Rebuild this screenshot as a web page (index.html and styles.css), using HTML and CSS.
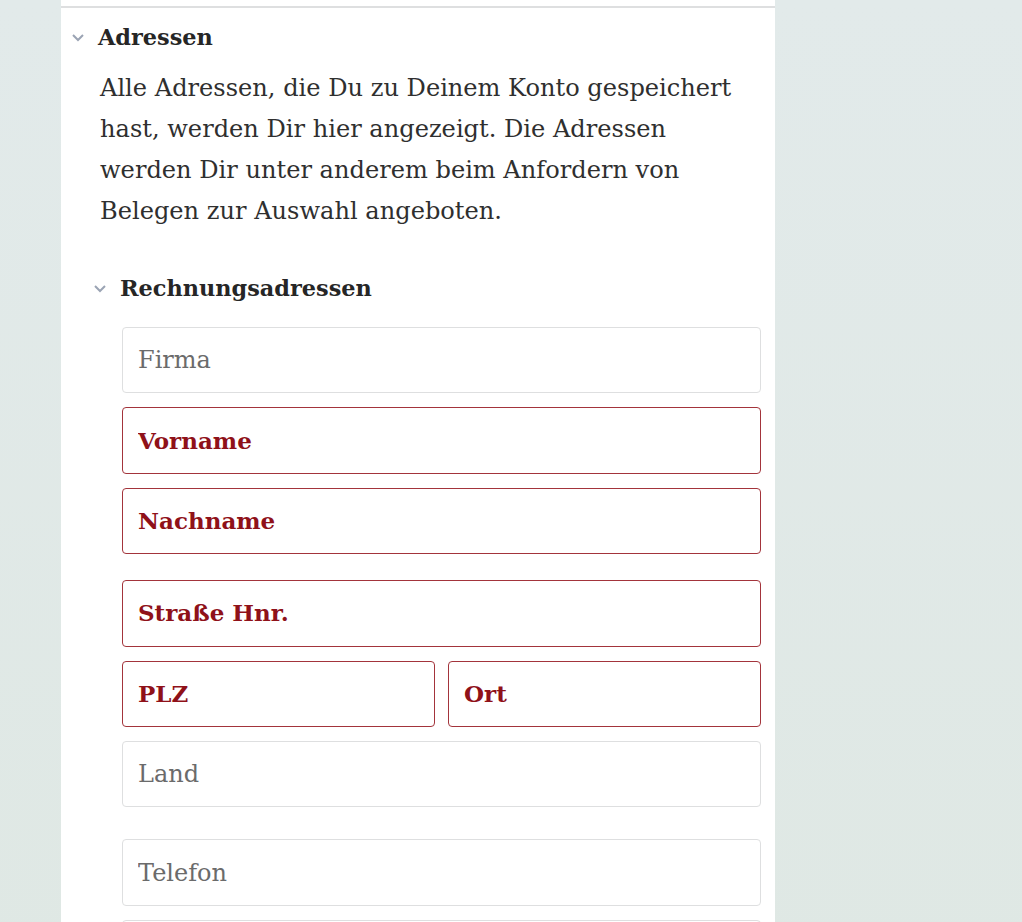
FILE: index.html
```html
<!DOCTYPE html>
<html lang="de">
<head>
  <meta charset="UTF-8">
  <meta name="viewport" content="width=device-width, initial-scale=1.0">
  <title>Adressen</title>
  <link rel="stylesheet" href="styles.css">
</head>
<body>
  <div class="panel">
    <section class="section">
      <h2 class="section-title">
        <svg class="chevron" width="14" height="10" viewBox="0 0 14 10" fill="none" stroke="currentColor" stroke-width="2">
          <polyline points="2,3 7,8 12,3"/>
        </svg>
        Adressen
      </h2>
      <p class="section-text">
        Alle Adressen, die Du zu Deinem Konto gespeichert hast, werden Dir hier angezeigt. Die Adressen werden Dir unter anderem beim Anfordern von Belegen zur Auswahl angeboten.
      </p>

      <div class="subsection">
        <h3 class="subsection-title">
          <svg class="chevron" width="14" height="10" viewBox="0 0 14 10" fill="none" stroke="currentColor" stroke-width="2">
            <polyline points="2,3 7,8 12,3"/>
          </svg>
          Rechnungsadressen
        </h3>

        <form class="address-form">
          <div class="field-group">
            <input class="field" type="text" placeholder="Firma">
            <input class="field required" type="text" placeholder="Vorname">
            <input class="field required" type="text" placeholder="Nachname">
          </div>
          <div class="field-group">
            <input class="field required" type="text" placeholder="Straße Hnr.">
            <div class="field-row">
              <input class="field required" type="text" placeholder="PLZ">
              <input class="field required" type="text" placeholder="Ort">
            </div>
            <input class="field" type="text" placeholder="Land">
          </div>
          <div class="field-group spaced">
            <input class="field" type="text" placeholder="Telefon">
            <input class="field" type="text" placeholder="E-Mail">
          </div>
        </form>
      </div>
    </section>
  </div>
</body>
</html>
```

FILE: styles.css
```css
:root {
  --bg: #e1e9e6;
  --surface: #ffffff;
  --text: #2b2b2b;
  --muted: #6b6b6b;
  --line: #dedfe0;
  --error: #8f1119;
  --error-line: #a3343b;
  --chevron: #9ba4b4;
}

* {
  margin: 0;
  padding: 0;
  box-sizing: border-box;
}

body {
  font-family: 'DejaVu Serif', 'Liberation Serif', serif;
  background: linear-gradient(180deg, #e2eaea 0%, #dfe8e4 100%);
  color: var(--text);
  min-height: 100vh;
  overflow: hidden;
}

.panel {
  width: 714px;
  margin-left: 61px;
  min-height: 100vh;
  padding-top: 6px;
  background: var(--surface);
}

.section {
  border-top: 2px solid var(--line);
  padding: 13px 0 0 10px;
}

.section-title,
.subsection-title {
  display: flex;
  align-items: center;
  gap: 13px;
  font-size: 22.4px;
  font-weight: 700;
  line-height: 32px;
  color: #262626;
}

.chevron {
  color: var(--chevron);
  flex-shrink: 0;
}

.section-text {
  margin: 15px 0 0 29px;
  max-width: 645px;
  font-size: 24.1px;
  line-height: 41px;
  color: #2f2f2f;
}

.subsection {
  margin: 40px 0 0 22px;
}

.address-form {
  margin: 23px 0 0 29px;
  width: 639px;
  display: flex;
  flex-direction: column;
  gap: 26px;
}

.field-group {
  display: flex;
  flex-direction: column;
  gap: 14px;
}

.field-group.spaced {
  margin-top: 6px;
}

.field-row {
  display: grid;
  grid-template-columns: 1fr 1fr;
  gap: 13px;
}

.field {
  width: 100%;
  height: 66.4px;
  padding: 0 15px;
  border: 1px solid var(--line);
  border-radius: 4px;
  background: var(--surface);
  font-family: inherit;
  font-size: 24px;
  color: var(--text);
  outline: none;
}

.field::placeholder {
  color: var(--muted);
}

.field.required {
  border-color: var(--error-line);
}

.field.required::placeholder {
  color: var(--error);
  font-size: 23px;
  font-weight: 700;
}
```
